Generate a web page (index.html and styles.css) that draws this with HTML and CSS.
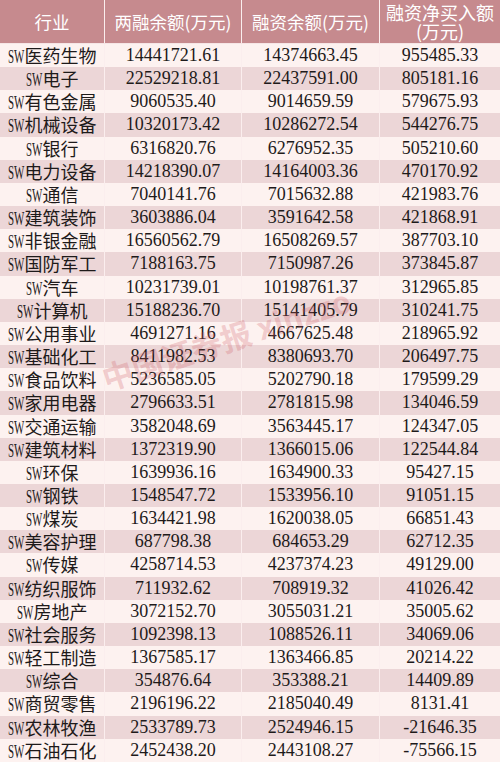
FILE: index.html
```html
<!DOCTYPE html>
<html lang="zh-CN">
<head>
<meta charset="utf-8">
<title>融资数据</title>
<link rel="stylesheet" href="styles.css">
</head>
<body>
<div class="sheet">
  <div class="table">
    <div class="row head">
      <div class="c">行业</div>
      <div class="c">两融余额(万元)</div>
      <div class="c">融资余额(万元)</div>
      <div class="c two">融资净买入额<br>(万元)</div>
    </div>
    <div class="row"><div class="c"><span class="sw">SW</span>医药生物</div><div class="c">14441721.61</div><div class="c">14374663.45</div><div class="c">955485.33</div></div>
    <div class="row alt"><div class="c"><span class="sw">SW</span>电子</div><div class="c">22529218.81</div><div class="c">22437591.00</div><div class="c">805181.16</div></div>
    <div class="row"><div class="c"><span class="sw">SW</span>有色金属</div><div class="c">9060535.40</div><div class="c">9014659.59</div><div class="c">579675.93</div></div>
    <div class="row alt"><div class="c"><span class="sw">SW</span>机械设备</div><div class="c">10320173.42</div><div class="c">10286272.54</div><div class="c">544276.75</div></div>
    <div class="row"><div class="c"><span class="sw">SW</span>银行</div><div class="c">6316820.76</div><div class="c">6276952.35</div><div class="c">505210.60</div></div>
    <div class="row alt"><div class="c"><span class="sw">SW</span>电力设备</div><div class="c">14218390.07</div><div class="c">14164003.36</div><div class="c">470170.92</div></div>
    <div class="row"><div class="c"><span class="sw">SW</span>通信</div><div class="c">7040141.76</div><div class="c">7015632.88</div><div class="c">421983.76</div></div>
    <div class="row alt"><div class="c"><span class="sw">SW</span>建筑装饰</div><div class="c">3603886.04</div><div class="c">3591642.58</div><div class="c">421868.91</div></div>
    <div class="row"><div class="c"><span class="sw">SW</span>非银金融</div><div class="c">16560562.79</div><div class="c">16508269.57</div><div class="c">387703.10</div></div>
    <div class="row alt"><div class="c"><span class="sw">SW</span>国防军工</div><div class="c">7188163.75</div><div class="c">7150987.26</div><div class="c">373845.87</div></div>
    <div class="row"><div class="c"><span class="sw">SW</span>汽车</div><div class="c">10231739.01</div><div class="c">10198761.37</div><div class="c">312965.85</div></div>
    <div class="row alt"><div class="c"><span class="sw">SW</span>计算机</div><div class="c">15188236.70</div><div class="c">15141405.79</div><div class="c">310241.75</div></div>
    <div class="row"><div class="c"><span class="sw">SW</span>公用事业</div><div class="c">4691271.16</div><div class="c">4667625.48</div><div class="c">218965.92</div></div>
    <div class="row alt"><div class="c"><span class="sw">SW</span>基础化工</div><div class="c">8411982.53</div><div class="c">8380693.70</div><div class="c">206497.75</div></div>
    <div class="row"><div class="c"><span class="sw">SW</span>食品饮料</div><div class="c">5236585.05</div><div class="c">5202790.18</div><div class="c">179599.29</div></div>
    <div class="row alt"><div class="c"><span class="sw">SW</span>家用电器</div><div class="c">2796633.51</div><div class="c">2781815.98</div><div class="c">134046.59</div></div>
    <div class="row"><div class="c"><span class="sw">SW</span>交通运输</div><div class="c">3582048.69</div><div class="c">3563445.17</div><div class="c">124347.05</div></div>
    <div class="row alt"><div class="c"><span class="sw">SW</span>建筑材料</div><div class="c">1372319.90</div><div class="c">1366015.06</div><div class="c">122544.84</div></div>
    <div class="row"><div class="c"><span class="sw">SW</span>环保</div><div class="c">1639936.16</div><div class="c">1634900.33</div><div class="c">95427.15</div></div>
    <div class="row alt"><div class="c"><span class="sw">SW</span>钢铁</div><div class="c">1548547.72</div><div class="c">1533956.10</div><div class="c">91051.15</div></div>
    <div class="row"><div class="c"><span class="sw">SW</span>煤炭</div><div class="c">1634421.98</div><div class="c">1620038.05</div><div class="c">66851.43</div></div>
    <div class="row alt"><div class="c"><span class="sw">SW</span>美容护理</div><div class="c">687798.38</div><div class="c">684653.29</div><div class="c">62712.35</div></div>
    <div class="row"><div class="c"><span class="sw">SW</span>传媒</div><div class="c">4258714.53</div><div class="c">4237374.23</div><div class="c">49129.00</div></div>
    <div class="row alt"><div class="c"><span class="sw">SW</span>纺织服饰</div><div class="c">711932.62</div><div class="c">708919.32</div><div class="c">41026.42</div></div>
    <div class="row"><div class="c"><span class="sw">SW</span>房地产</div><div class="c">3072152.70</div><div class="c">3055031.21</div><div class="c">35005.62</div></div>
    <div class="row alt"><div class="c"><span class="sw">SW</span>社会服务</div><div class="c">1092398.13</div><div class="c">1088526.11</div><div class="c">34069.06</div></div>
    <div class="row"><div class="c"><span class="sw">SW</span>轻工制造</div><div class="c">1367585.17</div><div class="c">1363466.85</div><div class="c">20214.22</div></div>
    <div class="row alt"><div class="c"><span class="sw">SW</span>综合</div><div class="c">354876.64</div><div class="c">353388.21</div><div class="c">14409.89</div></div>
    <div class="row"><div class="c"><span class="sw">SW</span>商贸零售</div><div class="c">2196196.22</div><div class="c">2185040.49</div><div class="c">8131.41</div></div>
    <div class="row alt"><div class="c"><span class="sw">SW</span>农林牧渔</div><div class="c">2533789.73</div><div class="c">2524946.15</div><div class="c">-21646.35</div></div>
    <div class="row"><div class="c"><span class="sw">SW</span>石油石化</div><div class="c">2452438.20</div><div class="c">2443108.27</div><div class="c">-75566.15</div></div>
  </div>
  <div class="watermark">中国证券报 xinzzo</div>
</div>
</body>
</html>
```

FILE: styles.css
```css
html, body {
  margin: 0;
  padding: 0;
  background: #fdf2f0;
}

.sheet {
  position: relative;
  width: 500px;
  height: 762px;
  overflow: hidden;
}

.table {
  display: flex;
  flex-direction: column;
  width: 500px;
}

.row {
  display: grid;
  grid-template-columns: 105px 137px 138px 120px;
  height: 23.16px;
  flex: none;
  background: #fdf2f0;
  color: #1e1a1a;
  font-family: "Liberation Serif", "Noto Sans CJK SC", serif;
  font-size: 18px;
}

.row.alt {
  background: #ecd6d7;
}

.c {
  display: block;
  text-align: center;
  white-space: nowrap;
  border-right: 1px solid #fbeeee;
  box-sizing: border-box;
  line-height: 23px;
}

.c:last-child {
  border-right: 0;
}

.row .c:first-child {
  font-family: "Noto Sans CJK SC", sans-serif;
  font-size: 18px;
}

.row.head {
  height: 44px;
  background: #c68a8e;
  color: #fff;
  font-family: "Noto Sans CJK SC", sans-serif;
  font-size: 17.5px;
  border-bottom: 1px solid #f6e6e6;
  box-sizing: border-box;
}

.head .c {
  line-height: 43px;
}

.head .c:first-child {
  font-size: 17.5px;
}

.head .c.two {
  font-size: 18px;
  line-height: 19px;
  padding-top: 3px;
}

.sw {
  display: inline-block;
  width: 16px;
  margin-right: 1px;
  font-family: "Liberation Serif", serif;
  font-size: 19.5px;
  line-height: 1;
  transform: scaleX(0.56);
  transform-origin: 0 50%;
  text-align: left;
}

.watermark {
  position: absolute;
  left: 226px;
  top: 338px;
  transform: translate(-50%, -50%) rotate(-18deg);
  font-family: "Noto Sans CJK SC", "Liberation Sans", sans-serif;
  font-weight: 700;
  font-size: 31px;
  color: rgba(205, 90, 100, 0.26);
  white-space: nowrap;
  pointer-events: none;
}
```
